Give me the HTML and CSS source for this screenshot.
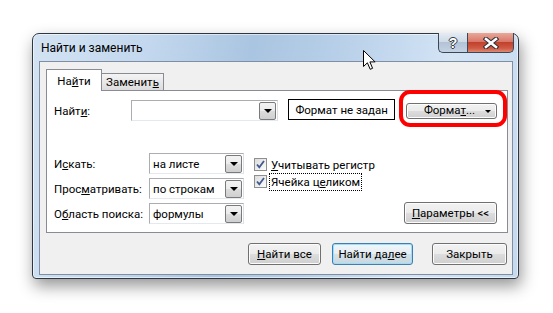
FILE: index.html
```html
<!DOCTYPE html>
<html lang="ru">
<head>
    <meta charset="UTF-8">
    <title>Найти и заменить</title>
    <link rel="stylesheet" href="styles.css">
</head>
<body>

<div class="desktop">
    <div class="window">
        <div class="titlebar">
            <span class="title">Найти и заменить</span>
            <div class="caption">
                <span class="cap help">?</span>
                <span class="cap close">
                    <svg width="16" height="12" viewBox="0 0 16 12">
                        <path d="M3 2 L13 10 M13 2 L3 10" stroke="#2b2f36" stroke-width="4.6" stroke-linecap="square"/>
                        <path d="M3 2 L13 10 M13 2 L3 10" stroke="#fff" stroke-width="2.6" stroke-linecap="square"/>
                    </svg>
                </span>
            </div>
        </div>

        <div class="client">
            <div class="tabs">
                <div class="tab active">На<u>й</u>ти</div>
                <div class="tab">Заменит<u>ь</u></div>
            </div>

            <div class="panel">
                <!-- find row -->
                <div class="find-row">
                    <span class="find-label">Найт<u>и</u>:</span>
                    <div class="combo find-input">
                        <span class="combo-text"></span>
                        <span class="drop"><i class="tri"></i></span>
                    </div>
                    <div class="format-preview">Формат не задан</div>
                    <div class="format-wrap">
                        <button class="btn format-btn">Форма<u>т</u>...<i class="tri small"></i></button>
                        <span class="highlight"></span>
                    </div>
                </div>

                <!-- options -->
                <div class="options">
                    <div class="option-grid">
                        <span class="opt-label">И<u>с</u>кать:</span>
                        <div class="combo"><span class="combo-text">на листе</span><span class="drop"><i class="tri"></i></span></div>
                        <span class="opt-label">Прос<u>м</u>атривать:</span>
                        <div class="combo"><span class="combo-text">по строкам</span><span class="drop"><i class="tri"></i></span></div>
                        <span class="opt-label">О<u>б</u>ласть поиска:</span>
                        <div class="combo"><span class="combo-text">формулы</span><span class="drop"><i class="tri"></i></span></div>
                    </div>

                    <div class="checks">
                        <div class="check-row">
                            <span class="checkbox"><svg width="11" height="11" viewBox="0 0 11 11"><path d="M2 5.5 L4.3 8.3 L9 2" fill="none" stroke="#3f5a8e" stroke-width="1.8"/></svg></span>
                            <span class="check-text"><u>У</u>читывать регистр</span>
                        </div>
                        <div class="check-row">
                            <span class="checkbox"><svg width="11" height="11" viewBox="0 0 11 11"><path d="M2 5.5 L4.3 8.3 L9 2" fill="none" stroke="#3f5a8e" stroke-width="1.8"/></svg></span>
                            <span class="check-text focused">Ячейка ц<u>е</u>ликом</span>
                        </div>
                        <button class="btn params-btn"><u>П</u>араметры &lt;&lt;</button>
                    </div>
                </div>
            </div>

            <div class="actions">
                <button class="btn find-all"><u>Н</u>айти все</button>
                <button class="btn default find-next">Найти да<u>л</u>ее</button>
                <button class="btn close-btn">Закрыть</button>
            </div>
        </div>
    </div>

    <svg class="cursor" width="14" height="22" viewBox="0 0 14 22">
        <path d="M0.5 0.5 L0.5 16.5 L4.4 12.8 L7.2 19.3 L9.6 18.3 L6.9 11.9 L12.1 11.9 Z" fill="#fff" stroke="#000" stroke-width="1"/>
    </svg>
</div>

</body>
</html>
```

FILE: styles.css
```css
* {
    box-sizing: border-box;
}
body {
    margin: 0;
    background-color: #ffffff;
    font-family: Roboto, "Liberation Sans", Arial, sans-serif;
    font-size: 11.5px;
    color: #000000;
}
u {
    text-decoration: underline;
    text-underline-offset: 1px;
}
.desktop {
    position: relative;
    width: 553px;
    height: 313px;
    padding: 33px 0 0 32px;
    overflow: hidden;
}
.window {
    width: 487px;
    height: 246px;
    display: flex;
    flex-direction: column;
    padding: 0 5px 3px 6px;
    border: 1px solid #2e3742;
    border-radius: 7px 7px 4px 4px;
    background: linear-gradient(100deg, #d2e2f2 0%, #c3d8ee 22%, #aac5e1 42%, #b7cfe8 58%, #d3e4f5 80%, #c6daef 100%);
    box-shadow: inset 0 0 0 1px rgba(255, 255, 255, 0.55), 2px 7px 16px rgba(0, 0, 0, 0.42);
}
.titlebar {
    height: 27px;
    display: flex;
    justify-content: space-between;
}
.title {
    align-self: center;
    padding: 1px 0 0 2px;
    font-size: 12px;
    color: #000;
}
.caption {
    display: flex;
    margin: -1px -1px 0 0;
    height: 20px;
}
.cap {
    display: flex;
    align-items: center;
    justify-content: center;
    height: 20px;
    border: 1px solid #3a4756;
    border-top: none;
}
.help {
    width: 29px;
    border-right: none;
    border-radius: 0 0 0 5px;
    background: linear-gradient(#e4ebf3 0%, #cfdbe8 45%, #b3c3d5 50%, #c3d3e4 100%);
    color: #fff;
    font-family: "Liberation Sans", Arial, sans-serif;
    font-weight: bold;
    font-size: 14px;
    text-shadow: -1px 0 #333b45, 1px 0 #333b45, 0 -1px #333b45, 0 1px #333b45;
}
.close {
    width: 47px;
    border-radius: 0 0 5px 0;
    background: linear-gradient(#e9a898 0%, #d9786a 45%, #c2412c 50%, #cf5a45 80%, #de8a72 100%);
}
.client {
    flex: 1;
    display: flex;
    flex-direction: column;
    padding: 7px 4px 0 6px;
    border: 1px solid #7f8ea2;
    background-color: #f0f0f0;
}
.tabs {
    display: flex;
    height: 21px;
    align-items: flex-end;
}
.tab {
    height: 17px;
    width: 63px;
    margin-left: -1px;
    padding-top: 1px;
    text-align: center;
    border: 1px solid #898c95;
    border-bottom: none;
    background: linear-gradient(#f4f4f4, #dcdcdc);
}
.tab.active {
    position: relative;
    z-index: 1;
    width: 56px;
    height: 22px;
    margin: 0 0 -1px 0;
    padding-top: 4px;
    background: #ffffff;
}
.panel {
    height: 143px;
    padding: 9px 10px 0 7px;
    border: 1px solid #898c95;
    background-color: #ffffff;
}
.find-row {
    display: flex;
    align-items: center;
    height: 21px;
}
.find-label {
    width: 77px;
}
.combo {
    position: relative;
    display: flex;
    align-items: center;
    width: 95px;
    height: 21px;
    padding: 1px;
    border: 1px solid #abadb3;
    border-right-color: #dbdfe6;
    border-bottom-color: #e3e9ef;
    background: #fff;
}
.combo-text {
    flex: 1;
    padding-left: 2px;
}
.find-input {
    width: 148px;
}
.drop {
    display: flex;
    align-items: center;
    justify-content: center;
    width: 17px;
    height: 18px;
    border: 1px solid #7a7a7a;
    border-radius: 2px;
    background: linear-gradient(#f3f3f3 0%, #ebebeb 50%, #dcdcdc 51%, #cfcfcf 100%);
}
.tri {
    width: 0;
    height: 0;
    border-left: 4px solid transparent;
    border-right: 4px solid transparent;
    border-top: 4px solid #000;
}
.tri.small {
    position: absolute;
    right: 5px;
    top: 6px;
    border-left-width: 3px;
    border-right-width: 3px;
    border-top-width: 3px;
}
.format-preview {
    width: 107px;
    height: 21px;
    margin: -2px 0 0 10px;
    border: 1px solid #000;
    display: flex;
    align-items: center;
    justify-content: center;
}
.format-wrap {
    position: relative;
    margin-left: 11px;
}
.btn {
    position: relative;
    font-family: inherit;
    font-size: 11.5px;
    color: #000;
    padding: 0;
    border: 1px solid #707070;
    border-radius: 3px;
    background: linear-gradient(#f2f2f2 0%, #ebebeb 50%, #dddddd 51%, #cfcfcf 100%);
    box-shadow: inset 0 0 0 1px #fcfcfc;
    cursor: default;
}
.format-btn {
    display: block;
    width: 91px;
    height: 16px;
    line-height: 13px;
    padding-right: 4px;
}
.highlight {
    position: absolute;
    left: -7px;
    right: -10px;
    top: -13px;
    bottom: -8px;
    border: 4px solid #ff0000;
    border-radius: 11px;
}
.options {
    display: flex;
    margin-top: 32px;
}
.option-grid {
    display: grid;
    grid-template-columns: 95px 95px;
    grid-auto-rows: 21px;
    row-gap: 4px;
    align-items: center;
}
.checks {
    flex: 1;
    display: flex;
    flex-direction: column;
    margin-left: 10px;
    padding-top: 3px;
}
.check-row {
    display: flex;
    align-items: center;
    height: 17px;
}
.checkbox {
    display: flex;
    align-items: center;
    justify-content: center;
    width: 13px;
    height: 13px;
    border: 1px solid #8e8f8f;
    background: linear-gradient(135deg, #dcdcdc, #fdfdfd);
}
.check-text {
    margin-left: 2px;
    padding: 1px 1px;
    border: 1px solid transparent;
}
.check-text.focused {
    border: 1px dotted #000;
}
.params-btn {
    align-self: flex-end;
    margin-top: auto;
    width: 93px;
    height: 22px;
}
.actions {
    display: flex;
    justify-content: flex-end;
    margin-top: 10px;
    padding-right: 1px;
}
.actions .btn {
    height: 22px;
}
.find-all {
    width: 73px;
}
.find-next {
    width: 81px;
    margin-left: 11px;
}
.close-btn {
    width: 75px;
    margin-left: 19px;
}
.btn.default {
    border-color: #3c7fb1;
    box-shadow: inset 0 0 0 1px #9fdcf7;
    background: linear-gradient(#f0f6fa 0%, #e6eef3 50%, #d6e1e8 51%, #c9d6de 100%);
}
.cursor {
    position: absolute;
    left: 363px;
    top: 50px;
}
```
